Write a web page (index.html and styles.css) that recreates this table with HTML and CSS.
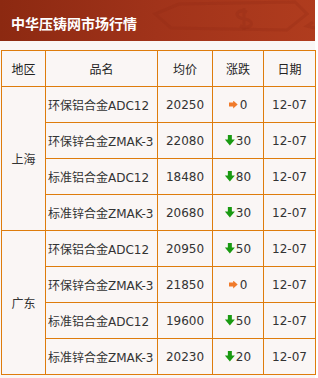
FILE: index.html
```html
<!DOCTYPE html>
<html lang="zh-CN">

<head>
    <meta charset="UTF-8">
    <meta name="viewport" content="width=device-width, initial-scale=1.0">
    <title>中华压铸网市场行情</title>
    <link rel="stylesheet" href="styles.css">
</head>

<body>
    <div id="market-box">
        <div id="market-title">
            <svg class="title-mark" width="180" height="41" viewBox="0 0 180 41">
                <path d="M44 4 L160 2 L172 14 L152 30 L36 28 L20 14 Z" fill="none" stroke="#8e2812" stroke-width="3" opacity="0.25"/>
                <path d="M112 12 q-8 -3 -10 2 q0 4 8 5 q8 2 6 6 q-3 4 -11 1 M109 8 v22" fill="none" stroke="#8e2812" stroke-width="3" opacity="0.25"/>
                <path d="M178 22 L172 26 L180 28" fill="none" stroke="#8e2812" stroke-width="3" opacity="0.25"/>
            </svg>
            <span>中华压铸网市场行情</span>
        </div>
        <table id="price-table">
            <colgroup>
                <col class="col-area">
                <col class="col-name">
                <col class="col-price">
                <col class="col-change">
                <col class="col-date">
            </colgroup>
            <thead>
                <tr>
                    <th>地区</th>
                    <th>品名</th>
                    <th>均价</th>
                    <th>涨跌</th>
                    <th>日期</th>
                </tr>
            </thead>
            <tbody>
                <tr>
                    <td rowspan="4">上海</td>
                    <td class="name">环保铝合金ADC12</td>
                    <td>20250</td>
                    <td><span class="flat"></span>0</td>
                    <td>12-07</td>
                </tr>
                <tr>
                    <td class="name">环保锌合金ZMAK-3</td>
                    <td>22080</td>
                    <td><span class="down"></span>30</td>
                    <td>12-07</td>
                </tr>
                <tr>
                    <td class="name">标准铝合金ADC12</td>
                    <td>18480</td>
                    <td><span class="down"></span>80</td>
                    <td>12-07</td>
                </tr>
                <tr>
                    <td class="name">标准锌合金ZMAK-3</td>
                    <td>20680</td>
                    <td><span class="down"></span>30</td>
                    <td>12-07</td>
                </tr>
                <tr>
                    <td rowspan="4">广东</td>
                    <td class="name">环保铝合金ADC12</td>
                    <td>20950</td>
                    <td><span class="down"></span>50</td>
                    <td>12-07</td>
                </tr>
                <tr>
                    <td class="name">环保锌合金ZMAK-3</td>
                    <td>21850</td>
                    <td><span class="flat"></span>0</td>
                    <td>12-07</td>
                </tr>
                <tr>
                    <td class="name">标准铝合金ADC12</td>
                    <td>19600</td>
                    <td><span class="down"></span>50</td>
                    <td>12-07</td>
                </tr>
                <tr>
                    <td class="name">标准锌合金ZMAK-3</td>
                    <td>20230</td>
                    <td><span class="down"></span>20</td>
                    <td>12-07</td>
                </tr>
            </tbody>
        </table>
    </div>
</body>

</html>
```

FILE: styles.css
```css
body {
    margin: 0;
    background: #fff;
    font-family: 'DejaVu Sans', 'Noto Sans CJK SC', sans-serif;
    color: #333;
}

#market-box {
    width: 315px;
    height: 378px;
    background: #faf6f5;
}

#market-title {
    position: relative;
    height: 41px;
    padding-left: 11px;
    background: linear-gradient(to right, #8c2911, #a1331a 50%, #b03c1e);
    display: flex;
    align-items: center;
    overflow: hidden;
}

#market-title span {
    position: relative;
    color: #fff;
    font-family: 'Noto Sans CJK SC', sans-serif;
    font-size: 14px;
    font-weight: bold;
    margin-top: 4px;
}

.title-mark {
    position: absolute;
    top: 0;
    left: 135px;
}

#price-table {
    margin: 9px 0 0 1px;
    width: 314px;
    table-layout: fixed;
    border-collapse: collapse;
    font-size: 12px;
}

.col-area {
    width: 44px;
}

.col-name {
    width: 112px;
}

.col-price {
    width: 55px;
}

.col-change {
    width: 51px;
}

.col-date {
    width: 52px;
}

#price-table th,
#price-table td {
    height: 35px;
    padding: 0;
    border: 1px solid #de7c0c;
    text-align: center;
    white-space: nowrap;
    font-weight: normal;
}

#price-table th {
    font-family: 'Noto Sans CJK SC', sans-serif;
    font-size: 12px;
    color: #222;
}

#price-table td.name {
    text-align: left;
    padding-left: 2px;
    overflow: hidden;
}

.down,
.flat {
    display: inline-block;
    vertical-align: -1px;
}

.down {
    width: 10px;
    height: 11px;
    margin-right: 1px;
    background: #1a9a12;
    clip-path: polygon(30% 0, 70% 0, 70% 45%, 100% 45%, 50% 100%, 0 45%, 30% 45%);
}

.flat {
    width: 9px;
    height: 8px;
    margin-right: 2px;
    vertical-align: 0;
    background: #f07a2a;
    clip-path: polygon(0 25%, 50% 25%, 50% 0, 100% 50%, 50% 100%, 50% 75%, 0 75%);
}
```
